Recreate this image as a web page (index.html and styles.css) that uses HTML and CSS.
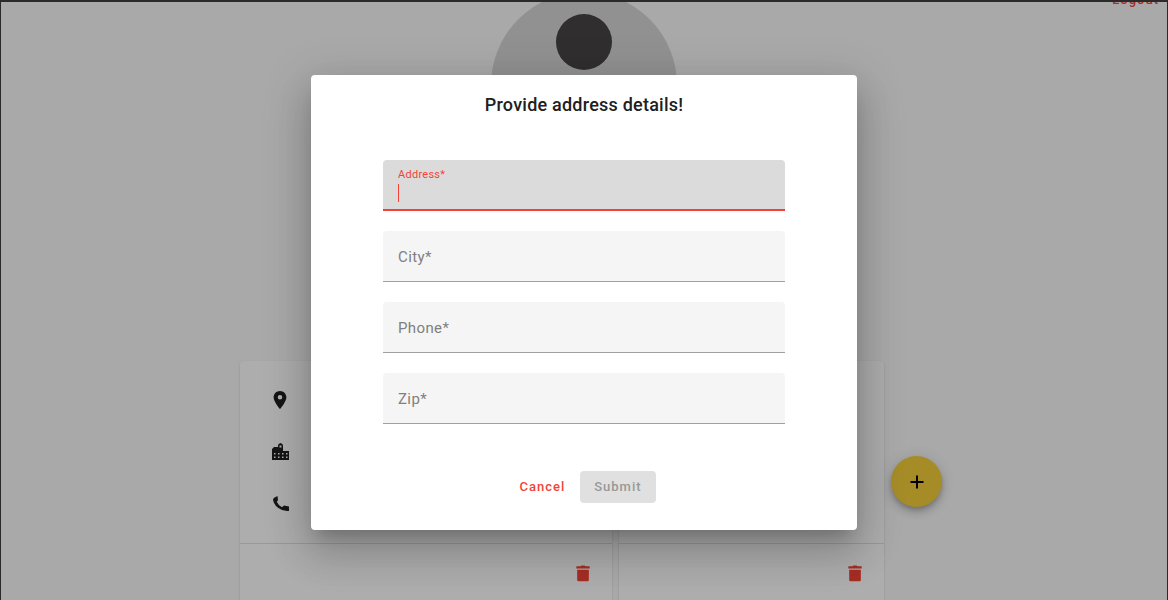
FILE: index.html
```html
<!DOCTYPE html>
<html lang="en">
<head>
<meta charset="utf-8">
<meta name="viewport" content="width=device-width, initial-scale=1">
<title>Address details</title>
<link rel="stylesheet" href="styles.css">
</head>
<body>
<div class="frame">
  <div class="page">
    <header class="topbar"><a class="logout" href="#">Logout</a></header>
    <div class="avatar"><span class="avatar-head"></span></div>
    <main class="addresses">
      <article class="card card-wide">
        <ul class="details">
          <li><svg class="icon" viewBox="1 1 22 22"><path fill-rule="evenodd" d="M12 2C8.130 2 5 5.130 5 9c0 5.250 7 13 7 13s7-7.750 7-13c0-3.870-3.130-7-7-7zm0 9.500a2.500 2.500 0 1 1 0-5 2.500 2.500 0 0 1 0 5z"/></svg></li>
          <li><svg class="icon" viewBox="0 0 20 20"><path fill-rule="evenodd" d="M2 18V7L4 5h4V3.500q0-2 2.500-2.500Q13 1.500 13 3.500V9h6v9zM9.500 3.500v2h2v-2zM4 11v1.500h1.500V11zm4 0v1.500h1.500V11zm4 0v1.500h1.500V11zm4 0v1.500h1.500V11zM4 14.500V16h1.500v-1.500zm4 0V16h1.500v-1.500zm4 0V16h1.500v-1.500zm4 0V16h1.500v-1.500z"/></svg></li>
          <li><svg class="icon" viewBox="0 0 20 20"><path d="M7.500 2 4.200 3.800Q3 4.500 3 6q2 9.500 14 11h2v-4.500L14 11.500l-2 1.700Q8 11 6.800 7.800L8 6.200z"/></svg></li>
        </ul>
        <footer class="card-actions"><button class="delete" type="button" aria-label="Delete address"><svg class="icon" viewBox="0 0 24 24"><path d="M5 8h14v12.500q0 1.500-1.500 1.500h-11Q5 22 5 20.500z"/><path d="M4 4h5l1-1h4l1 1h5v2.500H4z"/></svg></button></footer>
      </article>
      <article class="card card-narrow">
        <div class="details"></div>
        <footer class="card-actions"><button class="delete" type="button" aria-label="Delete address"><svg class="icon" viewBox="0 0 24 24"><path d="M5 8h14v12.500q0 1.500-1.500 1.500h-11Q5 22 5 20.500z"/><path d="M4 4h5l1-1h4l1 1h5v2.500H4z"/></svg></button></footer>
      </article>
      <button class="fab" type="button" aria-label="Add address"><svg viewBox="0 0 22 22"><path d="M17.500 12H12v5.500h-2V12H4.500v-2H10V4.500h2V10h5.500z"/></svg></button>
    </main>
  </div>
  <div class="overlay">
    <form class="dialog" role="dialog" aria-labelledby="dialog-title">
      <h2 class="title" id="dialog-title">Provide address details!</h2>
      <div class="fields">
        <div class="field active"><label for="address">Address*</label><input id="address" type="text"><span class="caret"></span></div>
        <div class="field"><label for="city">City*</label><input id="city" type="text"></div>
        <div class="field"><label for="phone">Phone*</label><input id="phone" type="tel"></div>
        <div class="field"><label for="zip">Zip*</label><input id="zip" type="text"></div>
      </div>
      <div class="actions">
        <button class="button cancel" type="button">Cancel</button>
        <button class="button submit" type="submit" disabled>Submit</button>
      </div>
    </form>
  </div>
</div>
</body>
</html>
```
FILE: styles.css
```css
* { box-sizing: border-box; }
body {
  margin: 0;
  font-family: Roboto, "Liberation Sans", sans-serif;
  color: #202020;
}
.frame {
  position: relative;
  height: 100vh;
  overflow: hidden;
  border: solid #2b2a2b;
  border-width: 2px 1px 0;
  background: #fafafa;
}
.page { margin-top: -12px; }
.topbar {
  display: flex;
  justify-content: flex-end;
  height: 2px;
  padding-right: 8px;
}
.logout {
  color: #f44336;
  font-size: 13px;
  font-weight: 500;
  line-height: 20px;
  letter-spacing: 1px;
  text-decoration: none;
}
.avatar {
  display: flex;
  justify-content: center;
  align-items: flex-start;
  width: 186px;
  height: 186px;
  margin: 0 auto;
  padding-top: 22px;
  border-radius: 50%;
  background: #d6d6d6;
}
.avatar-head {
  width: 56px;
  height: 56px;
  border-radius: 50%;
  background: #474445;
}
.addresses {
  display: flex;
  justify-content: center;
  gap: 7px;
  margin-top: 183px;
  padding-left: 14px;
}
.card {
  border-radius: 4px;
  background: #fff;
  box-shadow: 0 2px 1px -1px rgba(0,0,0,.2), 0 1px 1px rgba(0,0,0,.14), 0 1px 3px rgba(0,0,0,.12);
}
.card-wide { width: 372px; }
.card-narrow { width: 265px; }
.details {
  display: flex;
  flex-direction: column;
  gap: 32px;
  height: 182px;
  margin: 0;
  padding: 29px 30px;
  list-style: none;
}
.details li { display: flex; height: 20px; }
.icon { display: block; width: 20px; height: 20px; fill: #202020; }
.card-actions {
  display: flex;
  justify-content: flex-end;
  padding: 19px;
  border-top: 1px solid #e0e0e0;
  height: 72px;
}
.delete {
  height: 20px;
  padding: 0;
  border: 0;
  background: none;
}
.delete .icon { fill: #f44336; }
.fab {
  display: grid;
  place-items: center;
  width: 51px;
  height: 51px;
  margin-top: 95px;
  padding: 0;
  border: 0;
  border-radius: 50%;
  background: #f5cf3a;
  box-shadow: 0 3px 5px -1px rgba(0,0,0,.2), 0 6px 10px rgba(0,0,0,.14), 0 1px 18px rgba(0,0,0,.12);
}
.fab svg { width: 22px; height: 22px; }
.overlay {
  position: absolute;
  inset: 0;
  display: flex;
  justify-content: center;
  align-items: center;
  padding-top: 3px;
  background: rgba(0,0,0,.32);
}
.dialog {
  width: 546px;
  max-width: 90%;
  padding: 18px 72px 27px;
  border-radius: 4px;
  background: #fff;
  box-shadow: 0 11px 15px -7px rgba(0,0,0,.2), 0 24px 38px 3px rgba(0,0,0,.14), 0 9px 46px 8px rgba(0,0,0,.12);
}
.title {
  margin: 0 0 43px;
  font-size: 18px;
  font-weight: 500;
  line-height: 24px;
  letter-spacing: 0.0125em;
  text-align: center;
}
.fields { display: grid; gap: 20px; }
.field {
  position: relative;
  height: 51px;
  border-bottom: 1px solid #a0a0a0;
  border-radius: 4px 4px 0 0;
  background: #f5f5f5;
}
.field label {
  position: absolute;
  left: 15px;
  top: 15px;
  color: #808080;
  font-size: 15px;
  line-height: 22px;
  letter-spacing: 0.025em;
  pointer-events: none;
}
.field input {
  width: 100%;
  height: 100%;
  padding: 18px 15px 4px;
  border: 0;
  outline: 0;
  background: none;
  font: inherit;
  font-size: 15px;
}
.field.active { border-bottom: 2px solid #f44336; background: #dbdbdb; }
.field.active label {
  top: 6px;
  color: #f44336;
  font-size: 11px;
  line-height: 17px;
}
.caret {
  position: absolute;
  left: 15px;
  top: 24px;
  width: 1px;
  height: 18px;
  background: #f44336;
}
.actions {
  display: flex;
  justify-content: center;
  gap: 8px;
  margin-top: 47px;
}
.button {
  height: 32px;
  border: 0;
  border-radius: 4px;
  background: none;
  font-family: inherit;
  font-size: 13px;
  font-weight: 500;
  letter-spacing: 1px;
}
.cancel { padding: 0 7px 2px; color: #f44336; }
.submit { padding: 0 14px 2px; background: #e0e0e0; color: #989898; }
```
